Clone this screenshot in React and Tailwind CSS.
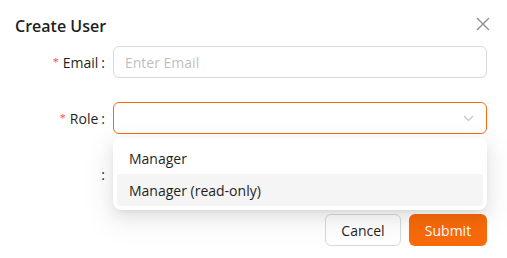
export default function App() {
  const font = { fontFamily: '"Open Sans", "Noto Sans", sans-serif' };
  return (
    <div className="w-[507px] h-[258px] bg-white relative text-[#1f1f1f] overflow-hidden" style={font}>
      <div className="flex items-center justify-between pl-[15px] pr-[17px] pt-[14px] h-[38px]">
        <div className="text-[16px] font-semibold leading-[24px] text-[#1f1f1f]">Create User</div>
        <svg width="14" height="14" viewBox="0 0 14 14" className="mt-[-4px]">
          <path d="M1 1 L13 13 M13 1 L1 13" stroke="#8c8c8c" strokeWidth="1.3" fill="none" />
        </svg>
      </div>
      <div className="flex flex-col gap-[24px] mt-[8px]">
        <div className="flex items-center h-[32px]">
          <Label text="Email" required />
          <div className="ml-[8px] w-[374px] h-[32px] border border-[#d9d9d9] rounded-[6px] flex items-center px-[11px] text-[14px] text-[#bfbfbf]">
            Enter Email
          </div>
        </div>
        <div className="flex items-center h-[32px] relative">
          <Label text="Role" required />
          <div className="ml-[8px] w-[374px] h-[32px] border border-[#f76b0e] rounded-[6px] flex items-center justify-end pr-[12px]">
            <svg width="11" height="7" viewBox="0 0 11 7">
              <path d="M1 1 L5.5 5.5 L10 1" stroke="#c4c4c4" strokeWidth="1.2" fill="none" />
            </svg>
          </div>
          <div className="absolute left-[113px] top-[36px] w-[374px] bg-white rounded-[8px] p-[4px] shadow-[0_6px_16px_0_rgba(0,0,0,0.08),0_3px_6px_-4px_rgba(0,0,0,0.12),0_9px_28px_8px_rgba(0,0,0,0.05)] z-10">
            <div className="h-[32px] flex items-center px-[12px] text-[14px] text-[#1f1f1f]">Manager</div>
            <div className="h-[32px] flex items-center px-[12px] text-[14px] text-[#1f1f1f] bg-[#f5f5f5] rounded-[4px]">Manager (read-only)</div>
          </div>
        </div>
        <div className="flex items-center h-[32px]">
          <Label text="" />
        </div>
        <div className="flex justify-end gap-[8px] pr-[20px]">
          <div className="w-[76px] h-[32px] border border-[#d9d9d9] rounded-[6px] flex items-center justify-center text-[14px] text-[#1f1f1f]">Cancel</div>
          <div className="w-[78px] h-[32px] bg-[#f96a0b] rounded-[6px] flex items-center justify-center text-[14px] text-white">Submit</div>
        </div>
      </div>
    </div>
  );
}

function Label({ text, required }) {
  return (
    <div className="w-[105px] flex justify-end items-center text-[14px] text-[#1f1f1f]">
      {required && <span className="text-[#ff4d4f] mr-[4px] text-[12px] leading-none" style={{ fontFamily: '"Liberation Serif", serif' }}>*</span>}
      <span>{text}</span>
      <span className="ml-[3px]">:</span>
    </div>
  );
}
